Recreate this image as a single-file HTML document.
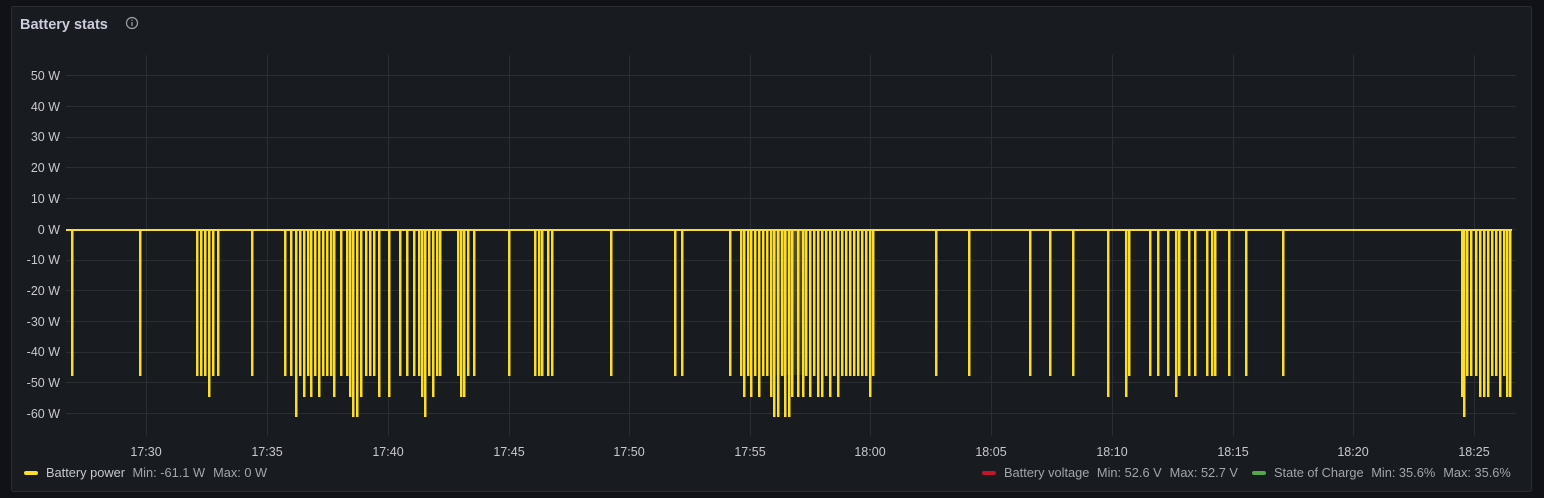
<!DOCTYPE html>
<html><head><meta charset="utf-8"><style>
html,body{margin:0;padding:0;background:#111217;width:1544px;height:498px;overflow:hidden}
svg{display:block}
text{font-family:"Liberation Sans",sans-serif}
</style></head><body>
<svg id="s" width="1544" height="498" xmlns="http://www.w3.org/2000/svg">
<defs><linearGradient id="g" x1="0" y1="0" x2="0" y2="1"><stop offset="0" stop-color="#fade2a" stop-opacity="0.3"/><stop offset="1" stop-color="#fade2a" stop-opacity="0.12"/></linearGradient></defs>
<rect x="11.5" y="6.5" width="1520" height="485" rx="2" fill="#181b1f" stroke="#2a2d33"/>
<text x="20" y="29" font-size="14.5" font-weight="bold" fill="#ccccdc">Battery stats</text>
<circle cx="132" cy="23" r="5.5" fill="none" stroke="#a0a2aa" stroke-width="1.2"/>
<rect x="131.4" y="22" width="1.2" height="4" fill="#a0a2aa"/><rect x="131.4" y="19.6" width="1.2" height="1.2" fill="#a0a2aa"/>
<g id="grid" stroke="#2b2e33" stroke-width="1"></g>
<g font-size="12.5" fill="#c7c8d0" text-anchor="end">
<text x="60" y="80">50 W</text><text x="60" y="111">40 W</text><text x="60" y="141">30 W</text><text x="60" y="172">20 W</text><text x="60" y="203">10 W</text><text x="60" y="234">0 W</text><text x="60" y="264">-10 W</text><text x="60" y="295">-20 W</text><text x="60" y="326">-30 W</text><text x="60" y="356">-40 W</text><text x="60" y="387">-50 W</text><text x="60" y="418">-60 W</text>
</g>
<g font-size="12.5" fill="#c7c8d0" text-anchor="middle">
<text x="146" y="456">17:30</text><text x="267" y="456">17:35</text><text x="388" y="456">17:40</text><text x="509" y="456">17:45</text><text x="629" y="456">17:50</text><text x="750" y="456">17:55</text><text x="870" y="456">18:00</text><text x="991" y="456">18:05</text><text x="1112" y="456">18:10</text><text x="1233" y="456">18:15</text><text x="1353" y="456">18:20</text><text x="1474" y="456">18:25</text>
</g>
<rect x="775" y="230" width="31" height="145" fill="url(#g)"/>
<path id="p" fill="none" stroke="#fade2a" stroke-width="2" stroke-linejoin="miter"/>
<rect x="24" y="471" width="14" height="4" rx="2" fill="#fade2a"/>
<text x="46" y="477" font-size="12.8" fill="#c7c8d0">Battery power <tspan fill="#a3a5ad" dx="4">Min: -61.1 W</tspan><tspan fill="#a3a5ad" dx="8">Max: 0 W</tspan></text>
<rect x="982" y="471" width="14" height="4" rx="2" fill="#c4162a"/>
<text x="1004" y="477" font-size="12.8" fill="#a3a5ad">Battery voltage <tspan dx="4">Min: 52.6 V</tspan><tspan dx="8">Max: 52.7 V</tspan></text>
<rect x="1252" y="471" width="14" height="4" rx="2" fill="#56a64b"/>
<text x="1274" y="477" font-size="12.8" fill="#a3a5ad">State of Charge <tspan dx="4">Min: 35.6%</tspan><tspan dx="8">Max: 35.6%</tspan></text>
</svg>
<script>
var g=document.getElementById('grid'),h='';
[75,106,137,167,198,229,260,290,321,352,382,413].forEach(function(y){h+='<line x1="66" x2="1516" y1="'+(y+.5)+'" y2="'+(y+.5)+'"/>';});
[146,267,388,509,629,750,870,991,1112,1233,1353,1474].forEach(function(x){h+='<line y1="55" y2="436" x1="'+(x+.5)+'" x2="'+(x+.5)+'"/>';});
g.innerHTML=h;
var A=375,B=396,C=416;
var s=[[72,A],[140,A],[197,A],[201,A],[205,A],[209,B],[213,A],[218,A],[252,A],[285,A],[291,A],[296,C],[300,A],[304,B],[308,A],[311,B],[315,A],[319,B],[323,A],[327,A],[331,A],[334,B],[341,A],[347,A],[350,B],[353,C],[357,C],[361,B],[366,A],[370,A],[374,A],[379,B],[389,B],[400,A],[407,A],[414,A],[419,A],[422,B],[425,C],[429,A],[433,B],[437,A],[440,A],[458,A],[461,B],[464,B],[468,A],[474,A],[509,A],[535,A],[539,A],[542,A],[548,A],[552,A],[611,A],[675,A],[682,A],[730,A],[741,A],[744,B],[748,A],[751,B],[755,A],[759,B],[763,A],[767,A],[771,B],[774,C],[778,C],[782,A],[785,C],[789,C],[792,B],[798,B],[803,B],[806,A],[810,B],[814,A],[818,B],[822,B],[826,A],[830,B],[834,A],[838,B],[842,A],[846,A],[850,A],[854,A],[858,A],[862,A],[866,A],[870,B],[873,A],[936,A],[969,A],[1030,A],[1050,A],[1073,A],[1108,B],[1126,B],[1129,A],[1150,A],[1158,A],[1168,A],[1176,B],[1179,A],[1189,A],[1195,A],[1207,A],[1212,A],[1215,A],[1229,A],[1246,A],[1283,A],[1462,B],[1464,C],[1467,A],[1471,A],[1476,A],[1480,B],[1484,B],[1488,B],[1492,A],[1496,A],[1500,B],[1504,A],[1507,B],[1510,B]];
var d='M66 230';
s.forEach(function(p){d+=' H'+p[0]+' V'+p[1]+' H'+(p[0]+0.5)+' V230';});
d+=' H1512';
document.getElementById('p').setAttribute('d',d);
</script>
</body></html>
